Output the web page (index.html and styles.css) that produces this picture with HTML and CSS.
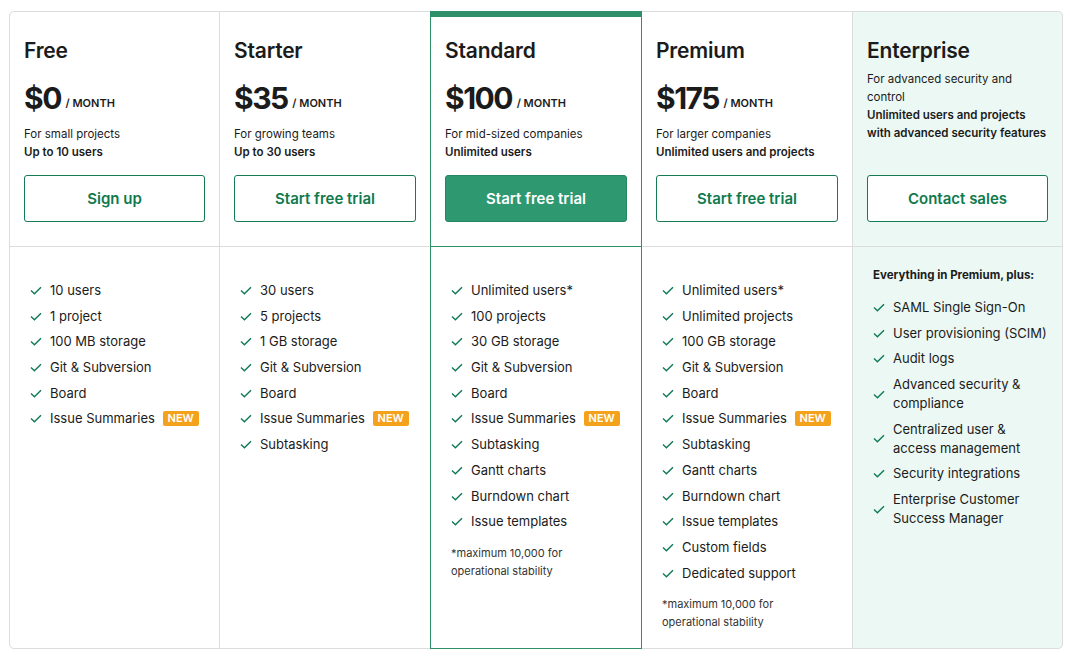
FILE: index.html
```html
<!DOCTYPE html>
<html lang="en">
<head>
  <meta charset="UTF-8">
  <meta name="viewport" content="width=device-width, initial-scale=1.0">
  <title>Pricing</title>
  <link rel="stylesheet" href="styles.css">
</head>
<body>
  <div class="pricing">

    <div class="plan">
      <div class="plan-head">
        <h2>Free</h2>
        <p class="price">$0 <span>/ MONTH</span></p>
        <p class="desc">For small projects<br><b>Up to 10 users</b></p>
        <a class="btn" href="#">Sign up</a>
      </div>
      <ul class="features">
        <li><i class="check"></i><span>10 users</span></li>
        <li><i class="check"></i><span>1 project</span></li>
        <li><i class="check"></i><span>100 MB storage</span></li>
        <li><i class="check"></i><span>Git &amp; Subversion</span></li>
        <li><i class="check"></i><span>Board</span></li>
        <li><i class="check"></i><span>Issue Summaries <em class="new">NEW</em></span></li>
      </ul>
    </div>

    <div class="plan before-featured">
      <div class="plan-head">
        <h2>Starter</h2>
        <p class="price">$35 <span>/ MONTH</span></p>
        <p class="desc">For growing teams<br><b>Up to 30 users</b></p>
        <a class="btn" href="#">Start free trial</a>
      </div>
      <ul class="features">
        <li><i class="check"></i><span>30 users</span></li>
        <li><i class="check"></i><span>5 projects</span></li>
        <li><i class="check"></i><span>1 GB storage</span></li>
        <li><i class="check"></i><span>Git &amp; Subversion</span></li>
        <li><i class="check"></i><span>Board</span></li>
        <li><i class="check"></i><span>Issue Summaries <em class="new">NEW</em></span></li>
        <li><i class="check"></i><span>Subtasking</span></li>
      </ul>
    </div>

    <div class="plan featured">
      <div class="plan-head">
        <h2>Standard</h2>
        <p class="price">$100 <span>/ MONTH</span></p>
        <p class="desc">For mid-sized companies<br><b>Unlimited users</b></p>
        <a class="btn btn-solid" href="#">Start free trial</a>
      </div>
      <ul class="features">
        <li><i class="check"></i><span>Unlimited users*</span></li>
        <li><i class="check"></i><span>100 projects</span></li>
        <li><i class="check"></i><span>30 GB storage</span></li>
        <li><i class="check"></i><span>Git &amp; Subversion</span></li>
        <li><i class="check"></i><span>Board</span></li>
        <li><i class="check"></i><span>Issue Summaries <em class="new">NEW</em></span></li>
        <li><i class="check"></i><span>Subtasking</span></li>
        <li><i class="check"></i><span>Gantt charts</span></li>
        <li><i class="check"></i><span>Burndown chart</span></li>
        <li><i class="check"></i><span>Issue templates</span></li>
      </ul>
      <p class="note">*maximum 10,000 for<br>operational stability</p>
    </div>

    <div class="plan">
      <div class="plan-head">
        <h2>Premium</h2>
        <p class="price">$175 <span>/ MONTH</span></p>
        <p class="desc">For larger companies<br><b>Unlimited users and projects</b></p>
        <a class="btn" href="#">Start free trial</a>
      </div>
      <ul class="features">
        <li><i class="check"></i><span>Unlimited users*</span></li>
        <li><i class="check"></i><span>Unlimited projects</span></li>
        <li><i class="check"></i><span>100 GB storage</span></li>
        <li><i class="check"></i><span>Git &amp; Subversion</span></li>
        <li><i class="check"></i><span>Board</span></li>
        <li><i class="check"></i><span>Issue Summaries <em class="new">NEW</em></span></li>
        <li><i class="check"></i><span>Subtasking</span></li>
        <li><i class="check"></i><span>Gantt charts</span></li>
        <li><i class="check"></i><span>Burndown chart</span></li>
        <li><i class="check"></i><span>Issue templates</span></li>
        <li><i class="check"></i><span>Custom fields</span></li>
        <li><i class="check"></i><span>Dedicated support</span></li>
      </ul>
      <p class="note">*maximum 10,000 for<br>operational stability</p>
    </div>

    <div class="plan enterprise">
      <div class="plan-head">
        <h2>Enterprise</h2>
        <p class="desc">For advanced security and control<br><b>Unlimited users and projects with advanced security features</b></p>
        <a class="btn" href="#">Contact sales</a>
      </div>
      <p class="plus">Everything in Premium, plus:</p>
      <ul class="features">
        <li><i class="check"></i><span>SAML Single Sign-On</span></li>
        <li><i class="check"></i><span>User provisioning (SCIM)</span></li>
        <li><i class="check"></i><span>Audit logs</span></li>
        <li><i class="check"></i><span>Advanced security &amp;<br>compliance</span></li>
        <li><i class="check"></i><span>Centralized user &amp;<br>access management</span></li>
        <li><i class="check"></i><span>Security integrations</span></li>
        <li><i class="check"></i><span>Enterprise Customer<br>Success Manager</span></li>
      </ul>
    </div>

  </div>
</body>
</html>
```

FILE: styles.css
```css
body {
  margin: 0;
  padding: 11px 8px 10px 9px;
  font-family: "Inter", "Liberation Sans", sans-serif;
  color: #1b1b1b;
  background-color: #fff;
}
.pricing {
  display: grid;
  grid-template-columns: 211px 210px 212px 211px 210px;
  height: 638px;
}
.plan {
  display: flex;
  flex-direction: column;
  border-top: 1px solid #dcdcdc;
  border-bottom: 1px solid #dcdcdc;
  border-right: 1px solid #dcdcdc;
  box-sizing: border-box;
}
.plan:first-child {
  border-left: 1px solid #dcdcdc;
  border-radius: 5px 0 0 5px;
}
.plan:last-child {
  border-radius: 0 5px 5px 0;
}
.plan.before-featured {
  border-right: none;
}
.plan.featured {
  border: 1px solid #2e8f69;
  border-top: 6px solid #2e8f69;
}
.plan.enterprise {
  background-color: #ebf8f3;
}
.plan-head {
  display: flex;
  flex-direction: column;
  height: 235px;
  box-sizing: border-box;
  padding: 26px 14px 24px 14px;
  border-bottom: 1px solid #dcdcdc;
}
.featured .plan-head {
  height: 230px;
  padding-top: 21px;
  border-bottom-color: #2e8f69;
}
.plan-head h2 {
  margin: 0;
  font-size: 21px;
  line-height: 26px;
  font-weight: 600;
  letter-spacing: -0.2px;
}
.price {
  margin: 16px 0 0;
  font-size: 30px;
  line-height: 36px;
  font-weight: 700;
  letter-spacing: -1.5px;
}
.price span {
  font-size: 11px;
  font-weight: 600;
  letter-spacing: 0;
  margin-left: -1px;
  vertical-align: 2px;
}
.desc {
  margin: 4px 0 0;
  font-size: 11.5px;
  line-height: 18px;
}
.enterprise .desc {
  margin-top: 6px;
}
.desc b {
  font-weight: 600;
}
.btn {
  margin-top: auto;
  display: flex;
  align-items: center;
  justify-content: center;
  height: 47px;
  box-sizing: border-box;
  border: 1px solid #167a52;
  border-radius: 3px;
  color: #0f7a4c;
  font-size: 15px;
  font-weight: 600;
  text-decoration: none;
  background-color: #fff;
}
.btn-solid {
  background-color: #2e9870;
  border-color: #268662;
  color: #fff;
}
.features {
  list-style: none;
  margin: 0;
  padding: 34px 10px 0 20px;
}
.features li {
  display: flex;
  align-items: center;
  gap: 8px;
  font-size: 13px;
  line-height: 19px;
  margin-bottom: 6.7px;
}
.check {
  flex: none;
  width: 12px;
  height: 9px;
  background: no-repeat center / 12px 9px url("data:image/svg+xml,%3Csvg xmlns='http://www.w3.org/2000/svg' viewBox='0 0 12 9'%3E%3Cpath d='M1 4.6l3.4 3.2L11 1.2' fill='none' stroke='%230f7a55' stroke-width='1.4'/%3E%3C/svg%3E");
}
.new {
  display: inline-block;
  margin-left: 4px;
  padding: 0 5px;
  font-style: normal;
  font-size: 11px;
  line-height: 15px;
  font-weight: 600;
  color: #fff;
  background-color: #f4a21b;
  border-radius: 2px;
  vertical-align: 1px;
}
.note {
  margin: 6px 0 0 20px;
  font-size: 11px;
  line-height: 18px;
  color: #333;
}
.plus {
  margin: 19px 0 0 20px;
  font-size: 11.5px;
  line-height: 19px;
  font-weight: 700;
}
.enterprise .features {
  padding-top: 13px;
}
```
